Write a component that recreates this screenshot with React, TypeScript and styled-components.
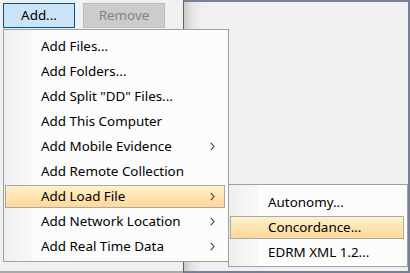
import React from "react";
import styled, { createGlobalStyle } from "styled-components";

/******************************************************
 *********************** Style *************************
 ******************************************************/

const GlobalStyle = createGlobalStyle`
  html, body {
    margin: 0;
    padding: 0;
    background: #f0f0f0;
  }
  body {
    font-family: "Segoe UI", "Noto Sans", "Open Sans", sans-serif;
    font-size: 13.4px;
    color: #000;
  }
`;

const Frame = styled.div`
  position: relative;
  width: 410px;
  height: 273px;
  overflow: hidden;
  display: flex;
  background: #f0f0f0;
`;

const LeftPane = styled.div`
  width: 183px;
  flex: none;
  box-sizing: border-box;
  border-bottom: 2px solid #a9a9a9;
`;

const RightPane = styled.div`
  flex: 1;
  box-sizing: border-box;
  border-left: 1px solid #5f5f5f;
  border-top: 2px solid #76829c;
  border-right: 2px solid #76829c;
  border-bottom: 2px solid #76829c;
  background: linear-gradient(to right, #c9c9c9 0px, #e4e4e4 8px, #f0f0f0 18px);
`;

const Toolbar = styled.div`
  display: flex;
  gap: 8px;
  padding: 3px 0 0 3px;
`;

const Button = styled.button<{ $pressed?: boolean }>`
  height: 25px;
  box-sizing: border-box;
  padding: 0 0 1px;
  font: inherit;
  border: 1px solid ${({ $pressed }) => ($pressed ? "#005499" : "#bfbfbf")};
  background: ${({ $pressed }) => ($pressed ? "#cce4f7" : "#cccccc")};
  color: ${({ $pressed }) => ($pressed ? "#000" : "#838383")};
  width: ${({ $pressed }) => ($pressed ? "72px" : "82px")};
`;

const Menu = styled.div<{
  $left: number;
  $top: number;
  $width: number;
  $padTop: number;
  $padBottom: number;
  $column: number;
}>`
  position: absolute;
  left: ${({ $left }) => $left}px;
  top: ${({ $top }) => $top}px;
  width: ${({ $width }) => $width}px;
  display: flex;
  flex-direction: column;
  box-sizing: border-box;
  border: 1px solid #a0a0a0;
  padding: ${({ $padTop, $padBottom }) => `${$padTop}px 0 ${$padBottom}px`};
  background: linear-gradient(
    to right,
    #efefef 0px,
    #f8f8f8 ${({ $column }) => $column}px,
    #fcfcfc ${({ $column }) => $column}px
  );
`;

const Item = styled.div<{ $active?: boolean; $indent: number }>`
  display: flex;
  align-items: center;
  height: 23px;
  margin: 1px 3px 1px 1px;
  box-sizing: border-box;
  padding: 0 9px 1px ${({ $indent }) => $indent}px;
  border: 1px solid ${({ $active }) => ($active ? "#a9a9a9" : "transparent")};
  background: ${({ $active }) =>
    $active ? "linear-gradient(#fff0ca, #ffd799)" : "transparent"};
  white-space: nowrap;
`;

const Label = styled.span`
  flex: 1;
`;

const Chevron = styled.svg`
  width: 5px;
  height: 9px;
  flex: none;
`;

/******************************************************
 ************************* Dom *************************
 ******************************************************/

interface MenuEntry {
  label: string;
  sub?: boolean;
}

const mainItems: MenuEntry[] = [
  { label: "Add Files..." },
  { label: "Add Folders..." },
  { label: 'Add Split "DD" Files...' },
  { label: "Add This Computer" },
  { label: "Add Mobile Evidence", sub: true },
  { label: "Add Remote Collection" },
  { label: "Add Load File", sub: true },
  { label: "Add Network Location", sub: true },
  { label: "Add Real Time Data", sub: true },
];

const loadFileItems: MenuEntry[] = [
  { label: "Autonomy..." },
  { label: "Concordance..." },
  { label: "EDRM XML 1.2..." },
];

const Arrow = () => (
  <Chevron viewBox="0 0 5 9">
    <path d="M0.8 0.8 L4 4.5 L0.8 8.2" fill="none" stroke="#404040" strokeWidth="1.1" />
  </Chevron>
);

const App: React.FC = () => {
  return (
    <>
      <GlobalStyle />
      <Frame>
        <LeftPane>
          <Toolbar>
            <Button $pressed>Add...</Button>
            <Button disabled>Remove</Button>
          </Toolbar>
        </LeftPane>
        <RightPane />

        <Menu $left={3} $top={29} $width={226} $padTop={4} $padBottom={2} $column={28}>
          {mainItems.map((item, index) => (
            <Item key={index} $active={index === 6} $indent={35}>
              <Label>{item.label}</Label>
              {item.sub && <Arrow />}
            </Item>
          ))}
        </Menu>

        <Menu $left={228} $top={184} $width={180} $padTop={5} $padBottom={1} $column={29}>
          {loadFileItems.map((item, index) => (
            <Item key={index} $active={index === 1} $indent={37}>
              <Label>{item.label}</Label>
            </Item>
          ))}
        </Menu>
      </Frame>
    </>
  );
};

export default App;
